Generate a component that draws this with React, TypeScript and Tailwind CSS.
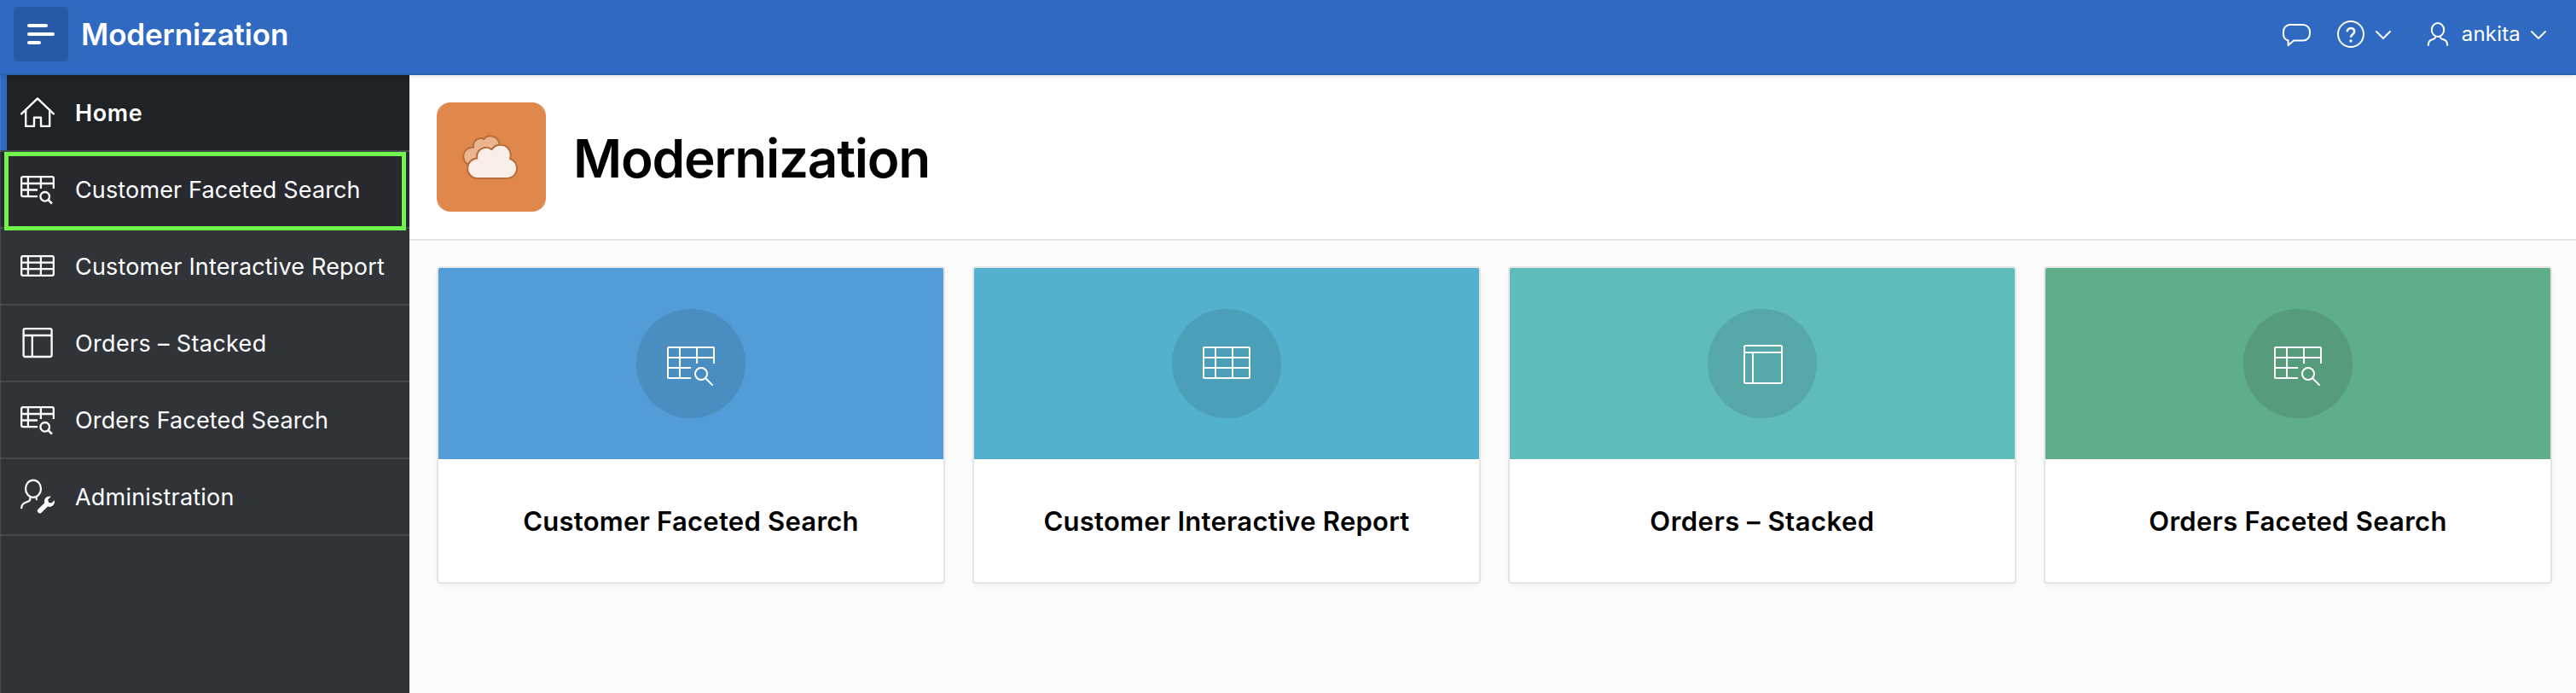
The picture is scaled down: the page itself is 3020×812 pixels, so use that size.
import type { ReactNode } from "react";

type IconProps = { className?: string };

function HomeIcon() {
  return (
    <svg viewBox="0 0 40 40" className="size-10" fill="none" stroke="currentColor" strokeWidth="2.4" strokeLinecap="round" strokeLinejoin="round">
      <path d="M1.2 21.3 20 3.4l18.8 17.9" />
      <path d="M6.2 17v18.9H16V25.8h8v10.1h10.2V17" />
    </svg>
  );
}

function TableSearchIcon() {
  return (
    <svg viewBox="0 0 40 40" className="size-10" fill="none" stroke="currentColor" strokeWidth="2.3" strokeLinecap="butt" strokeLinejoin="round">
      <path d="M20 28.2H3a1.9 1.9 0 0 1-1.9-1.9V7a1.9 1.9 0 0 1 1.9-1.9h34A1.9 1.9 0 0 1 38.9 7v12" />
      <path d="M1.1 13h37.8M1.1 20.5H20M8.9 5v23.2M23.9 5v14" />
      <circle cx="28.7" cy="28.3" r="5.3" />
      <path d="m32.5 32.1 4.4 4.4" strokeWidth="2.5" />
    </svg>
  );
}

function TableIcon() {
  return (
    <svg viewBox="0 0 40 40" className="size-10" fill="none" stroke="currentColor" strokeWidth="2.3">
      <rect x="1.1" y="8.1" width="37.8" height="22.8" rx="1.9" />
      <path d="M1.1 15.7h37.8M1.1 23.2h37.8M8.9 8v23M23.9 8v23" />
    </svg>
  );
}

function LayoutIcon() {
  return (
    <svg viewBox="0 0 40 40" className="size-10" fill="none" stroke="currentColor" strokeWidth="2.3">
      <rect x="3.6" y="3.2" width="33" height="32.8" rx="2" />
      <path d="M3.6 11h33M13.8 11v25" />
    </svg>
  );
}

function AdminIcon() {
  return (
    <svg viewBox="0 0 40 40" className="size-10 overflow-visible" fill="none" stroke="currentColor" strokeWidth="2.2" strokeLinecap="butt">
      <ellipse cx="15" cy="10.7" rx="9" ry="10.1" />
      <path d="M11.4 20.4v1.8c0 1.7-.8 2.7-2.4 3.4l-4 1.6C2.2 28.4 1.1 30 1.1 34" />
      <path d="M18.6 20.4v1.4c0 .8.2 1.5.7 2.1" />
      <path
        d="M35.8 19.8c-4.6-1.2-8.8 2.6-7.6 7.4l-7.4 7.2a2.8 2.8 0 0 0 4 4.2l7.2-7c4.8 1.4 9-2.8 7.8-7.4l-3.6 3.4-3.2-.8-.8-3.2z"
        fill="currentColor"
        stroke="none"
      />
    </svg>
  );
}

function CardTable({ search = false }: { search?: boolean }) {
  return (
    <svg viewBox="0 0 64 64" className="size-16" fill="none" stroke="currentColor" strokeWidth="2">
      {search ? (
        <>
          <path d="M32 49H6a1 1 0 0 1-1-1V14a1 1 0 0 1 1-1h52a1 1 0 0 1 1 1v18M5 25h54M5 37h27M19 13v36M39 13v19" />
          <circle cx="44" cy="44" r="7" />
          <path d="m49 49 8.6 8.6" />
        </>
      ) : (
        <>
          <rect x="5" y="13" width="54" height="36" rx="1" />
          <path d="M5 25h54M5 37h54M19 13v36M39 13v36" />
        </>
      )}
    </svg>
  );
}

function CardLayout() {
  return (
    <svg viewBox="0 0 64 64" className="size-16" fill="none" stroke="currentColor" strokeWidth="2">
      <rect x="11" y="11" width="44" height="44" rx="1.5" />
      <path d="M11 19h44M21 19v36" />
    </svg>
  );
}

function Chevron({ className }: IconProps) {
  return (
    <svg viewBox="0 0 20 12" className={className} fill="none" stroke="currentColor" strokeWidth="2" strokeLinecap="round" strokeLinejoin="round">
      <path d="m2 2 8 8 8-8" />
    </svg>
  );
}

function CloudLogo() {
  return (
    <div className="flex size-32 items-center justify-center rounded-2xl bg-[#e0874c]">
      <svg viewBox="0 0 128 128" className="size-32" stroke="#b66e3d" strokeWidth="2" strokeLinejoin="round">
        <path d="M37.5 73A10.6 10.6 0 0 1 43.2 52.8A8.6 8.6 0 0 1 55.2 43A10.4 10.4 0 0 1 73.4 49.5L60 72Z" fill="#eab58f" />
        <path d="M46.5 89A11.8 11.8 0 0 1 47.2 65.5A10.8 10.8 0 0 1 64.5 55.2A12.1 12.1 0 0 1 86 66A11.8 11.8 0 0 1 83 89Z" fill="#f9eee8" />
      </svg>
    </div>
  );
}

type NavItem = { label: string; icon: ReactNode; row: string };

const navItems: NavItem[] = [
  { label: "Home", icon: <HomeIcon />, row: "bg-[#1f2325] font-semibold tracking-[0.6px]" },
  { label: "Customer Faceted Search", icon: <TableSearchIcon />, row: "bg-[#27292e] tracking-[0.14px]" },
  { label: "Customer Interactive Report", icon: <TableIcon />, row: "tracking-[0.17px]" },
  { label: "Orders – Stacked", icon: <LayoutIcon />, row: "tracking-[0.34px]" },
  { label: "Orders Faceted Search", icon: <TableSearchIcon />, row: "tracking-[0.14px]" },
  { label: "Administration", icon: <AdminIcon />, row: "tracking-[0.2px]" },
];

const cards = [
  { label: "Customer Faceted Search", icon: <CardTable search />, color: "bg-[#529dd7]", track: "tracking-[0.25px]" },
  { label: "Customer Interactive Report", icon: <CardTable />, color: "bg-[#54b1cd]", track: "tracking-[0.26px]" },
  { label: "Orders – Stacked", icon: <CardLayout />, color: "bg-[#60bbbb]", track: "tracking-[0.5px]" },
  { label: "Orders Faceted Search", icon: <CardTable search />, color: "bg-[#60ad8a]", track: "tracking-[0.28px]" },
];

function Header() {
  return (
    <header className="relative z-10 flex h-[88px] shrink-0 items-center border-b-2 border-[#2a5eae] bg-[#2f69c2] pt-0.5 pr-[34px] pb-2 pl-4 text-white shadow-[0_1px_6px_rgba(0,0,0,0.12)]">
      <button className="flex size-16 items-center justify-center rounded bg-[#2859a5]">
        <svg viewBox="0 0 32 24" className="h-6 w-8" fill="none" stroke="currentColor" strokeWidth="4" strokeLinecap="round">
          <path d="M2 2h20M2 12h28M2 22h12" />
        </svg>
      </button>
      <span className="ml-[15px] text-[35px] leading-none font-semibold tracking-[-0.14px]">Modernization</span>
      <div className="ml-auto flex items-center">
        <svg viewBox="0 0 34 32" className="h-8 w-[34px]" fill="none" stroke="currentColor" strokeWidth="2" strokeLinejoin="round">
          <path d="M9 5h16a8 8 0 0 1 8 8v2.6a8 8 0 0 1-8 8H14l-6.4 5.6v-5.7A8 8 0 0 1 2 15.6V13a8 8 0 0 1 7-8Z" />
        </svg>
        <svg viewBox="0 0 32 32" className="ml-[31px] size-8" fill="none" stroke="currentColor" strokeWidth="2">
          <circle cx="16" cy="16" r="15" />
          <path d="M11.8 13.3c0-2.6 1.8-4.3 4.2-4.3s4.2 1.6 4.2 3.8c0 3.6-4.2 3.3-4.2 7" strokeWidth="2.6" />
          <circle cx="16" cy="24" r="1.7" fill="currentColor" stroke="none" />
        </svg>
        <Chevron className="mt-0.5 ml-3 h-3 w-5" />
        <svg viewBox="0 0 32 32" className="ml-[38px] size-8" fill="none" stroke="currentColor" strokeWidth="2" strokeLinecap="butt">
          <ellipse cx="16" cy="11" rx="7.2" ry="8" />
          <path d="M13.2 18.4v.8c0 1-.5 1.7-1.4 2.1l-4 1.7c-2.3 1-3 2.3-3 6.8M18.8 18.4v.8c0 1 .5 1.7 1.4 2.1l4 1.7c2.3 1 3 2.3 3 6.8" />
        </svg>
        <span className="ml-3 text-2xl leading-none tracking-[0.18px]">ankita</span>
        <Chevron className="mt-0.5 ml-[11px] h-3 w-5" />
      </div>
    </header>
  );
}

function Sidebar() {
  return (
    <nav className="relative w-[480px] shrink-0 bg-[#303438] text-white">
      {navItems.map((item, i) => (
        <a key={item.label} className="relative flex h-[90px] border-b-2 border-[#45494c]">
          <span className={`flex w-full items-center pl-6 text-[27px] leading-none ${item.row}`}>
            {item.icon}
            <span className="ml-6">{item.label}</span>
          </span>
          {i === 0 && <span className="absolute inset-y-0 left-0 w-2 bg-[#2f69c2]" />}
        </a>
      ))}
      <div className="absolute top-[90px] left-[5px] h-[92px] w-[471px] border-5 border-[#70f64a]" />
      <div className="absolute inset-y-0 left-0 w-px bg-white/10" />
    </nav>
  );
}

export default function App() {
  return (
    <div className="flex h-[812px] w-full flex-col overflow-hidden bg-[#fcfcfc] font-['Inter','Liberation_Sans',sans-serif] text-black">
      <Header />
      <div className="flex min-h-0 flex-1">
        <Sidebar />
        <main className="min-w-0 flex-1">
          <section className="flex h-[194px] items-center gap-8 border-b-2 border-[#e4e4e4] bg-white pl-8">
            <CloudLogo />
            <h1 className="pt-[3px] text-[62px] leading-none font-semibold tracking-[-1.24px]">Modernization</h1>
          </section>
          <section className="grid grid-cols-4 gap-8 pt-[30px] pr-7 pl-8">
            {cards.map((card) => (
              <article key={card.label} className="flex h-[372px] flex-col overflow-hidden rounded border-2 border-[#e5e5e5] bg-white shadow-[0_4px_8px_-2px_rgba(0,0,0,0.06)]">
                <div className={`flex h-56 items-center justify-center ${card.color}`}>
                  <div className="flex size-32 items-center justify-center rounded-full bg-black/10 text-white">{card.icon}</div>
                </div>
                <h2 className={`flex flex-1 items-center justify-center text-[31px] leading-none font-semibold ${card.track}`}>{card.label}</h2>
              </article>
            ))}
          </section>
        </main>
      </div>
    </div>
  );
}
